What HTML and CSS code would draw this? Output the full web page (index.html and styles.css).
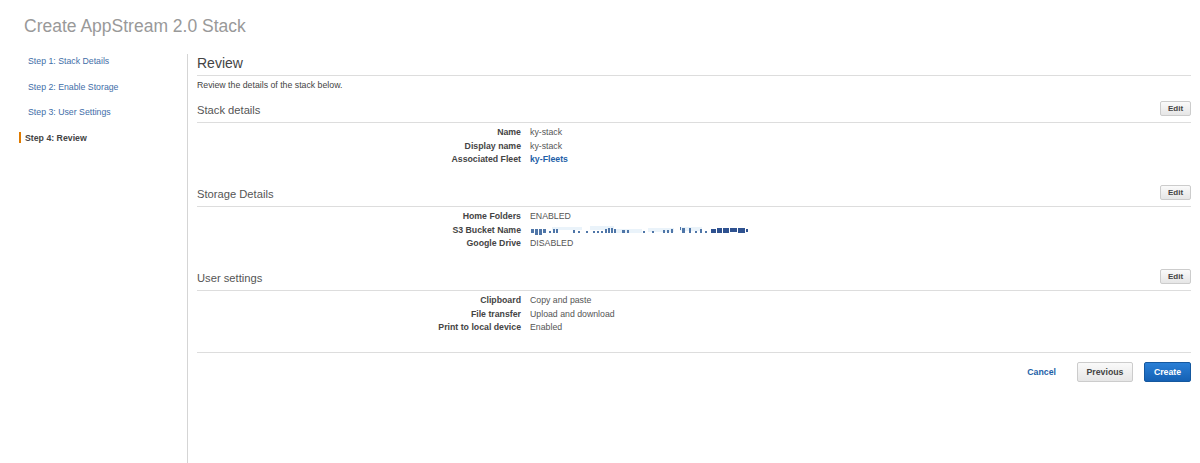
FILE: index.html
```html
<!DOCTYPE html>
<html lang="en">
<head>
<meta charset="UTF-8" />
<title>Create AppStream 2.0 Stack</title>
<link rel="stylesheet" href="styles.css">
</head>
<body>

<h1 class="page-title">Create AppStream 2.0 Stack</h1>

<div class="wizard">
  <ul class="steps">
    <li><a href="#">Step 1: Stack Details</a></li>
    <li><a href="#">Step 2: Enable Storage</a></li>
    <li><a href="#">Step 3: User Settings</a></li>
    <li class="current">Step 4: Review</li>
  </ul>

  <div class="content">
    <h2 class="review-title">Review</h2>
    <p class="intro">Review the details of the stack below.</p>

    <div class="section">
      <div class="section-head">
        <h3>Stack details</h3>
        <button class="btn btn-edit">Edit</button>
      </div>
      <dl class="details">
        <dt>Name</dt><dd>ky-stack</dd>
        <dt>Display name</dt><dd>ky-stack</dd>
        <dt>Associated Fleet</dt><dd><a href="#">ky-Fleets</a></dd>
      </dl>
    </div>

    <div class="section">
      <div class="section-head">
        <h3>Storage Details</h3>
        <button class="btn btn-edit">Edit</button>
      </div>
      <dl class="details">
        <dt>Home Folders</dt><dd>ENABLED</dd>
        <dt>S3 Bucket Name</dt>
        <dd>
          <svg class="blurred" width="220" height="10" viewBox="0 0 220 10" role="img" aria-label="Redacted bucket name">
            <g fill="#eaf3fa">
              <rect x="22" y="1" width="30" height="3"/><rect x="60" y="0" width="24" height="4"/><rect x="86" y="3" width="26" height="4"/>
              <rect x="118" y="2" width="26" height="4"/><rect x="150" y="1" width="22" height="4"/>
            </g>
            <g fill="#4f76a8">
              <rect x="1" y="3" width="3" height="4"/><rect x="5" y="3" width="3" height="6"/><rect x="9" y="3" width="3" height="6"/><rect x="13" y="3" width="3" height="4"/>
              <rect x="19" y="5" width="2" height="2"/><rect x="23" y="3" width="2" height="4"/><rect x="26" y="3" width="2" height="4"/>
              <rect x="43" y="4" width="2" height="3"/><rect x="48" y="5" width="2" height="2"/><rect x="56" y="5" width="2" height="2"/>
              <rect x="63" y="5" width="2" height="2"/><rect x="67" y="5" width="2" height="2"/><rect x="71" y="5" width="2" height="2"/>
              <rect x="75" y="3" width="2" height="4"/><rect x="78" y="2" width="2" height="5"/><rect x="81" y="2" width="2" height="5"/><rect x="84" y="3" width="2" height="4"/>
              <rect x="92" y="4" width="3" height="3"/><rect x="97" y="4" width="2" height="3"/>
              <rect x="113" y="5" width="2" height="2"/><rect x="122" y="5" width="2" height="2"/><rect x="133" y="4" width="2" height="3"/>
              <rect x="137" y="4" width="2" height="3"/><rect x="141" y="3" width="2" height="4"/><rect x="150" y="1" width="1" height="3"/>
              <rect x="152" y="2" width="3" height="5"/><rect x="159" y="2" width="2" height="5"/><rect x="165" y="5" width="2" height="2"/>
              <rect x="170" y="3" width="2" height="4"/><rect x="175" y="5" width="2" height="2"/>
            </g>
            <g fill="#2f5290">
              <rect x="181" y="3" width="5" height="4"/><rect x="187" y="2" width="5" height="5"/><rect x="193" y="2" width="6" height="5"/>
              <rect x="200" y="2" width="7" height="4"/><rect x="208" y="2" width="7" height="5"/><rect x="216" y="3" width="2" height="3"/>
            </g>
          </svg>
        </dd>
        <dt>Google Drive</dt><dd>DISABLED</dd>
      </dl>
    </div>

    <div class="section">
      <div class="section-head">
        <h3>User settings</h3>
        <button class="btn btn-edit">Edit</button>
      </div>
      <dl class="details">
        <dt>Clipboard</dt><dd>Copy and paste</dd>
        <dt>File transfer</dt><dd>Upload and download</dd>
        <dt>Print to local device</dt><dd>Enabled</dd>
      </dl>
    </div>

    <div class="actions">
      <a class="cancel" href="#">Cancel</a>
      <button class="btn btn-default">Previous</button>
      <button class="btn btn-primary">Create</button>
    </div>
  </div>
</div>

</body>
</html>
```

FILE: styles.css
```css
* {
  box-sizing: border-box;
}
html, body {
  height: 100%;
}
body {
  margin: 0;
  display: flex;
  flex-direction: column;
  overflow: hidden;
  background: #fff;
  color: #444;
  font-family: "Liberation Sans", Arial, sans-serif;
  font-size: 8.75px;
}
a {
  color: #1e5fa8;
  text-decoration: none;
}
.page-title {
  margin: 0;
  padding: 15px 0 0 24px;
  height: 54px;
  font-size: 17.5px;
  line-height: 22px;
  font-weight: 400;
  color: #999;
}
.wizard {
  flex: 1;
  display: flex;
}
.steps {
  width: 188px;
  margin: 0;
  padding: 0 0 0 19px;
  list-style: none;
  border-right: 1px solid #d5d5d5;
}
.steps li {
  height: 25.6px;
  padding: 2px 0 0 9px;
  line-height: 11px;
}
.steps a {
  color: #3f6ea8;
}
.steps .current {
  position: relative;
  padding-left: 6px;
  font-weight: 700;
  color: #444;
}
.steps .current::before {
  content: "";
  position: absolute;
  left: 0;
  top: 1px;
  width: 2px;
  height: 11px;
  background: #e07b00;
}
.content {
  width: 994px;
  margin-left: 9px;
}
.review-title {
  margin: 0;
  height: 22px;
  border-bottom: 1px solid #ddd;
  font-size: 14px;
  line-height: 19px;
  font-weight: 400;
  color: #444;
}
.intro {
  margin: 0;
  padding-top: 4px;
  height: 20px;
  line-height: 11px;
}
.section {
  height: 84px;
}
.section-head {
  display: flex;
  justify-content: space-between;
  align-items: center;
  height: 27px;
  border-bottom: 1px solid #ddd;
}
.section-head h3 {
  margin: 0;
  padding-top: 1px;
  font-size: 11.2px;
  font-weight: 400;
  color: #555;
}
.details {
  display: grid;
  grid-template-columns: 324px 1fr;
  grid-auto-rows: 13.2px;
  column-gap: 9px;
  margin: 3.4px 0 0;
  line-height: 13px;
}
.details dt {
  text-align: right;
  font-weight: 700;
  color: #444;
}
.details dd {
  margin: 0;
  color: #555;
}
.details dd a {
  font-weight: 700;
}
.blurred {
  display: block;
  margin-top: 2px;
  filter: blur(0.4px);
}
.btn {
  font-family: inherit;
  font-weight: 700;
  border-radius: 2px;
  cursor: pointer;
}
.btn-edit {
  width: 31px;
  height: 15px;
  margin-bottom: 2px;
  padding: 0;
  font-size: 8px;
  color: #444;
  border: 1px solid #ccc;
  background: linear-gradient(#fafafa, #e6e6e6);
}
.actions {
  display: flex;
  justify-content: flex-end;
  align-items: center;
  gap: 11px;
  margin-top: 4px;
  padding-top: 9px;
  border-top: 1px solid #ddd;
}
.cancel {
  font-weight: 700;
  margin-right: 10px;
}
.btn-default {
  width: 56px;
  height: 20px;
  padding: 0;
  font-size: 8.75px;
  color: #444;
  border: 1px solid #ccc;
  background: linear-gradient(#fafafa, #e6e6e6);
}
.btn-primary {
  width: 47px;
  height: 20px;
  padding: 0;
  font-size: 8.75px;
  color: #fff;
  border: 1px solid #15589f;
  background: linear-gradient(#2a7fd6, #1561b4);
}
```
